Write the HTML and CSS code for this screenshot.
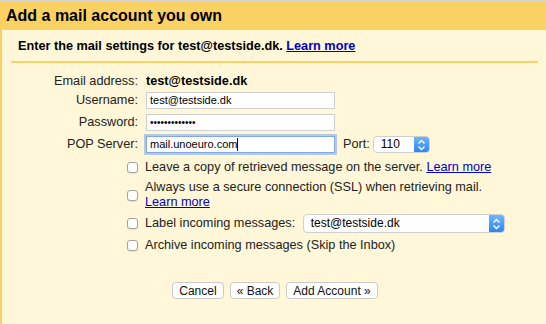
FILE: index.html
```html
<!DOCTYPE html>
<html lang="en">
<head>
    <meta charset="UTF-8">
    <title>Add a mail account you own</title>
    <link rel="stylesheet" href="styles.css">
</head>
<body>
    <div class="header">Add a mail account you own</div>
    <div class="panel">
        <div class="intro">Enter the mail settings for test@testside.dk. <a href="#" class="link">Learn more</a></div>
        <div class="divider"></div>

        <div class="form">
            <div class="row">
                <div class="label">Email address:</div>
                <div class="value"><b>test@testside.dk</b></div>
            </div>
            <div class="row row-tight">
                <div class="label">Username:</div>
                <div class="value"><div class="field">test@testside.dk</div></div>
            </div>
            <div class="row">
                <div class="label">Password:</div>
                <div class="value"><div class="field field-pass">&bull;&bull;&bull;&bull;&bull;&bull;&bull;&bull;&bull;&bull;&bull;&bull;&bull;</div></div>
            </div>
            <div class="row">
                <div class="label">POP Server:</div>
                <div class="value">
                    <div class="field focused">mail.unoeuro.com<span class="caret"></span></div>
                    <span class="port-label">Port:</span>
                    <div class="select select-port">
                        <span class="select-text">110</span>
                        <span class="select-btn">
                            <svg width="9" height="12" viewBox="0 0 9 12"><path d="M1.5 4.5 L4.5 1.5 L7.5 4.5 M1.5 7.5 L4.5 10.5 L7.5 7.5" fill="none" stroke="#fff" stroke-width="1.4"/></svg>
                        </span>
                    </div>
                </div>
            </div>

            <div class="row row-check row-check-first">
                <div class="label"><span class="check"></span></div>
                <div class="value">Leave a copy of retrieved message on the server. <a href="#" class="link">Learn more</a></div>
            </div>
            <div class="row row-check row-double">
                <div class="label"><span class="check"></span></div>
                <div class="value">Always use a secure connection (SSL) when retrieving mail.<br><a href="#" class="link">Learn more</a></div>
            </div>
            <div class="row row-check">
                <div class="label"><span class="check"></span></div>
                <div class="value">
                    Label incoming messages:
                    <div class="select select-label">
                        <span class="select-text">test@testside.dk</span>
                        <span class="select-btn">
                            <svg width="9" height="12" viewBox="0 0 9 12"><path d="M1.5 4.5 L4.5 1.5 L7.5 4.5 M1.5 7.5 L4.5 10.5 L7.5 7.5" fill="none" stroke="#fff" stroke-width="1.4"/></svg>
                        </span>
                    </div>
                </div>
            </div>
            <div class="row row-check">
                <div class="label"><span class="check"></span></div>
                <div class="value">Archive incoming messages (Skip the Inbox)</div>
            </div>
        </div>

        <div class="buttons">
            <button class="button">Cancel</button>
            <button class="button">&laquo; Back</button>
            <button class="button">Add Account &raquo;</button>
        </div>
    </div>
</body>
</html>
```

FILE: styles.css
```css
:root {
    --yellow: #fad163;
    --panel: #fff7d7;
    --link: #0000cc;
    --field-border: #cfcfcf;
}

* {
    box-sizing: border-box;
    margin: 0;
    padding: 0;
}

html, body {
    height: 100%;
}

body {
    font-family: 'Liberation Sans', Arial, sans-serif;
    font-size: 12.7px;
    color: #222;
    background-color: var(--panel);
    border-top: 1px solid #d6d6d6;
    display: flex;
    flex-direction: column;
}

.header {
    height: 29px;
    line-height: 29px;
    padding-left: 6px;
    background-color: var(--yellow);
    font-size: 16px;
    font-weight: bold;
    color: #000;
}

.panel {
    flex-grow: 1;
    border-left: 2px solid var(--yellow);
    background-color: var(--panel);
}

.intro {
    padding: 9px 0 0 16px;
    height: 31px;
    line-height: 15px;
    font-weight: bold;
    color: #000;
}

.link {
    color: var(--link);
    text-decoration: underline;
}

.divider {
    height: 2px;
    margin: 0 8px 0 9px;
    background-color: var(--yellow);
}

.form {
    display: flex;
    flex-direction: column;
    padding-top: 10px;
}

.row {
    display: flex;
    align-items: center;
    min-height: 17px;
    line-height: 17px;
    margin-top: 5px;
}

.row:first-child {
    margin-top: 0;
}

.row-tight {
    margin-top: 2px;
}

.row-check {
    margin-top: 4px;
}

.row-check-first {
    margin-top: 6px;
}

.row-double .value {
    line-height: 15px;
}

.label {
    width: 136px;
    text-align: right;
    display: flex;
    justify-content: flex-end;
    align-items: center;
}

.row-check .label {
    margin-right: -1px;
}

.value {
    margin-left: 8px;
    display: flex;
    align-items: center;
    flex-wrap: wrap;
    color: #222;
}

.row-double .value,
.row-check .value {
    display: block;
}

.value b {
    color: #000;
}

.field {
    width: 189px;
    height: 17px;
    line-height: 15px;
    padding: 0 3px;
    border: 1px solid var(--field-border);
    background-color: #fff;
    font-size: 11px;
    color: #000;
    display: flex;
    align-items: center;
}

.field-pass {
    font-size: 10px;
}

.focused {
    border-color: #7fa9e3;
    box-shadow: 0 0 0 2px rgba(120, 165, 235, 0.55);
}

.caret {
    display: inline-block;
    width: 1px;
    height: 13px;
    background-color: #000;
}

.port-label {
    margin-left: 8px;
}

.select {
    display: inline-flex;
    align-items: stretch;
    height: 17px;
    border: 1px solid #cfcfcf;
    border-radius: 4px;
    background-color: #fff;
    overflow: hidden;
    vertical-align: middle;
    font-size: 12px;
    color: #000;
}

.select-port {
    width: 57px;
    margin-left: 3px;
}

.select-label {
    width: 202px;
    height: 19px;
    margin-left: 4px;
}

.select-text {
    flex-grow: 1;
    padding-left: 7px;
    line-height: 15px;
    display: flex;
    align-items: center;
}

.select-btn {
    width: 15px;
    display: flex;
    align-items: center;
    justify-content: center;
    background: linear-gradient(#6fb5fb, #2d86f1);
}

.check {
    display: inline-block;
    width: 11px;
    height: 11px;
    border: 1px solid #a3a3a3;
    border-radius: 3px;
    background-color: #fff;
    box-shadow: 0 1px 1px rgba(0, 0, 0, 0.08);
}

.buttons {
    display: flex;
    justify-content: center;
    gap: 6px;
    margin-top: 28px;
    padding-left: 2px;
}

.button {
    height: 17px;
    padding: 0 6px;
    font-family: 'Liberation Sans', Arial, sans-serif;
    font-size: 12px;
    color: #111;
    background-color: #fff;
    border: 1px solid #cbcbcb;
    border-radius: 4px;
    cursor: pointer;
}
```
